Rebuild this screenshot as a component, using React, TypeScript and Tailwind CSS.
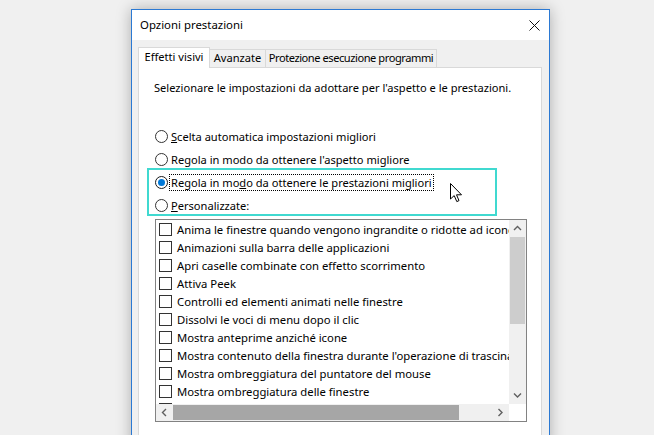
import React from 'react';

const items = [
  'Anima le finestre quando vengono ingrandite o ridotte ad icone',
  'Animazioni sulla barra delle applicazioni',
  'Apri caselle combinate con effetto scorrimento',
  'Attiva Peek',
  'Controlli ed elementi animati nelle finestre',
  'Dissolvi le voci di menu dopo il clic',
  'Mostra anteprime anziché icone',
  "Mostra contenuto della finestra durante l'operazione di trascinamento",
  'Mostra ombreggiatura del puntatore del mouse',
  'Mostra ombreggiatura delle finestre',
  'Mostra rettangolo di selezione trasparente',
];

function Radio({ checked }: { checked?: boolean }) {
  return (
    <span
      className={
        'flex h-[13px] w-[13px] shrink-0 items-center justify-center rounded-full border bg-white ' +
        (checked ? 'border-[#1a1a1a]' : 'border-[#333333]')
      }
    >
      {checked && <span className="h-[7px] w-[7px] rounded-full bg-[#0078d7]" />}
    </span>
  );
}

function RadioRow({ children, checked, focus }: { children: React.ReactNode; checked?: boolean; focus?: boolean }) {
  return (
    <div className="flex h-[23px] items-center gap-[2px]">
      <Radio checked={checked} />
      <span
        className={
          'whitespace-nowrap px-[1px] leading-[15px] ' +
          (focus ? 'outline-1 outline-dotted outline-[#000]' : '')
        }
      >
        {children}
      </span>
    </div>
  );
}

function Chevron({ dir }: { dir: 'up' | 'down' | 'left' | 'right' }) {
  const d = {
    up: 'M1 5 L4.5 1.5 L8 5',
    down: 'M1 1.5 L4.5 5 L8 1.5',
    left: 'M5 1 L1.5 4.5 L5 8',
    right: 'M1.5 1 L5 4.5 L1.5 8',
  }[dir];
  const horiz = dir === 'left' || dir === 'right';
  return (
    <svg width={horiz ? 7 : 9} height={horiz ? 9 : 7} viewBox={horiz ? '0 0 7 9' : '0 0 9 7'}>
      <path d={d} fill="none" stroke="#606060" strokeWidth="1.4" />
    </svg>
  );
}

export default function App() {
  return (
    <div className="relative h-[435px] w-[654px] overflow-hidden bg-[#f0f0f0] pl-[131px] pt-[9px] font-['Noto_Sans',sans-serif] text-[11.1px] text-black">
      <div className="h-[440px] w-[419px] border border-[#2b79d3] bg-[#f0f0f0] shadow-[0_0_14px_rgba(0,0,0,0.28)]">
        {/* title bar */}
        <div className="flex h-[30px] items-center justify-between bg-white pl-[8px] pr-[9px]">
          <span className="text-[11.4px] leading-[16px]">Opzioni prestazioni</span>
          <svg width="11" height="11" viewBox="0 0 11 11">
            <path d="M0.5 0.5 L10.5 10.5 M10.5 0.5 L0.5 10.5" stroke="#111" strokeWidth="1" />
          </svg>
        </div>

        {/* tabs */}
        <div className="relative z-10 -mb-px flex items-end whitespace-nowrap pl-[6px] pt-[7px]">
          <div className="flex h-[21px] w-[72px] shrink-0 items-center justify-center border border-b-0 border-[#d9d9d9] bg-white pb-[1px]">
            Effetti visivi
          </div>
          <div className="-ml-px flex h-[19px] w-[57px] shrink-0 items-center justify-center border border-[#d9d9d9] bg-[#f0f0f0]">
            Avanzate
          </div>
          <div className="-ml-px flex h-[19px] w-[172px] shrink-0 items-center justify-center overflow-hidden border border-[#d9d9d9] bg-[#f0f0f0] tracking-[-0.45px]">
            Protezione esecuzione programmi
          </div>
        </div>

        {/* panel */}
        <div className="ml-[6px] h-[400px] w-[404px] border border-[#d9d9d9] bg-white">
          <p className="pl-[15px] pt-[12px] leading-[16px]">
            Selezionare le impostazioni da adottare per l'aspetto e le prestazioni.
          </p>

          <div className="relative mt-[29px] pl-[16px]">
            <RadioRow>
              <u>S</u>celta automatica impostazioni migliori
            </RadioRow>
            <RadioRow>
              Re<u>g</u>ola in modo da ottenere l'aspetto migliore
            </RadioRow>
            <RadioRow checked focus>
              Regola in mo<u>d</u>o da ottenere le prestazioni migliori
            </RadioRow>
            <RadioRow>
              <u>P</u>ersonalizzate:
            </RadioRow>
            <div className="pointer-events-none absolute left-[8px] top-[43px] h-[48px] w-[350px] border-2 border-[#40d9d0]" />
          </div>

          {/* listbox */}
          <div className="ml-[16px] mt-[2px] flex h-[203px] w-[372px] flex-col border border-[#828282]">
            <div className="flex h-[184px]">
              <div className="w-[353px] overflow-hidden">
                {items.map((t) => (
                  <div key={t} className="flex h-[18px] items-center gap-[5px] pl-[3px]">
                    <span className="h-[13px] w-[13px] shrink-0 border border-[#333333] bg-white" />
                    <span className="whitespace-nowrap text-[11.3px] leading-[15px]">{t}</span>
                  </div>
                ))}
              </div>
              <div className="flex w-[17px] flex-col bg-[#f0f0f0]">
                <div className="flex h-[17px] items-center justify-center">
                  <Chevron dir="up" />
                </div>
                <div className="flex-1">
                  <div className="mx-auto h-[87px] w-[15px] bg-[#cdcdcd]" />
                </div>
                <div className="flex h-[17px] items-center justify-center">
                  <Chevron dir="down" />
                </div>
              </div>
            </div>
            <div className="flex h-[17px]">
              <div className="flex w-[353px] bg-[#f0f0f0]">
                <div className="flex w-[17px] items-center justify-center">
                  <Chevron dir="left" />
                </div>
                <div className="flex flex-1 items-center">
                  <div className="h-[15px] w-[286px] bg-[#a6a6a6]" />
                </div>
                <div className="flex w-[17px] items-center justify-center">
                  <Chevron dir="right" />
                </div>
              </div>
              <div className="w-[17px] bg-white" />
            </div>
          </div>
        </div>
      </div>

      {/* mouse cursor */}
      <svg className="absolute left-[450px] top-[183px]" width="13" height="20" viewBox="0 0 13 20">
        <path
          d="M0.5 0.5 L0.5 16 L4.2 12.6 L6.8 18.6 L9 17.6 L6.5 11.8 L11.5 11.8 Z"
          fill="#fff"
          stroke="#000"
          strokeWidth="1"
          strokeLinejoin="miter"
        />
      </svg>
    </div>
  );
}
